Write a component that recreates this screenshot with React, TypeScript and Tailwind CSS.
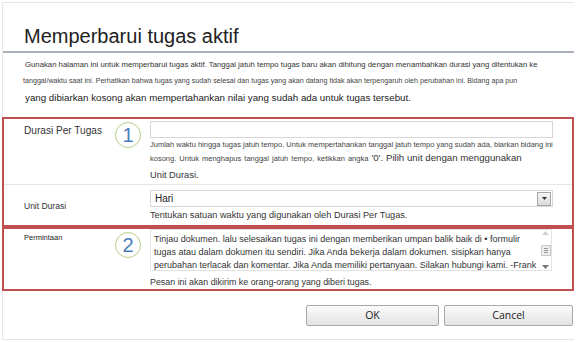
import React from "react";

const font = { fontFamily: '"Liberation Sans", Arial, sans-serif' };

// Numbered green callout circle.
function Callout({ n }: { n: string }) {
    return (
        <div className="flex h-[26px] w-[26px] items-center justify-center rounded-full border-[1.5px] border-[#b5cf8a] bg-white text-[20px] leading-none text-[#4a7ebb]">
            {n}
        </div>
    );
}

export default function App() {
    return (
        <div
            className="h-[342px] w-[576px] overflow-hidden bg-white text-[#333]"
            style={font}
        >
            <div className="ml-[2px] mt-[2px] flex h-[338px] w-[572px] flex-col border-l border-t border-b border-[#e6e6e6]">
                {/* title */}
                <div className="h-[48px] shrink-0 pl-[21px] pt-[21px]">
                    <h1 className="text-[20px] leading-[24px] text-[#222]">Memperbarui tugas aktif</h1>
                </div>
                <div className="h-[2px] shrink-0 bg-[#a9b0b8]" />

                {/* description */}
                <div className="h-[64px] shrink-0 pl-[22px] pt-[6px]">
                    <p className="whitespace-nowrap text-[7.75px] leading-[12px] text-[#333]">
                        Gunakan halaman ini untuk memperbarui tugas aktif. Tanggal jatuh tempo tugas baru akan dihitung dengan menambahkan durasi yang ditentukan ke
                    </p>
                    <p className="-ml-[2px] mt-[4px] whitespace-nowrap text-[7.15px] leading-[12px] text-[#444]">
                        tanggal/waktu saat ini. Perhatikan bahwa tugas yang sudah selesai dan tugas yang akan datang tidak akan terpengaruh oleh perubahan ini. Bidang apa pun
                    </p>
                    <p className="mt-[4px] whitespace-nowrap text-[9.75px] leading-[14px] text-[#222]">
                        yang dibiarkan kosong akan mempertahankan nilai yang sudah ada untuk tugas tersebut.
                    </p>
                </div>

                {/* box 1 */}
                <div className="-ml-[1px] h-[110px] w-[572px] shrink-0 border-2 border-[#c0504d]">
                    <div className="flex h-[66px] border-b border-[#e4e4e4]">
                        <div className="flex w-[146px] shrink-0 pl-[20px] pt-[5px]">
                            <span className="w-[91px] text-[10.1px] leading-[14px] text-[#333]">Durasi Per Tugas</span>
                            <div className="-mt-[2px]">
                                <Callout n="1" />
                            </div>
                        </div>
                        <div className="min-w-0 flex-1 pt-[2px]">
                            <div className="h-[17px] w-[403px] border border-[#d7d7d7] bg-white" />
                            <p className="mt-[1px] whitespace-nowrap text-[7.5px] leading-[12px] text-[#444]">
                                Jumlah waktu hingga tugas jatuh tempo. Untuk mempertahankan tanggal jatuh tempo yang sudah ada, biarkan bidang ini
                            </p>
                            <p className="whitespace-nowrap text-[7.5px] leading-[14px] text-[#444] [word-spacing:1px]">
                                kosong. Untuk menghapus tanggal jatuh tempo, ketikkan angka{" "}
                                <span className="text-[9.7px] text-[#333] [word-spacing:0px]">'0'. Pilih unit dengan menggunakan</span>
                            </p>
                            <p className="mt-[2px] text-[9.3px] leading-[14px] text-[#333]">Unit Durasi.</p>
                        </div>
                    </div>
                    <div className="flex h-[40px]">
                        <div className="w-[146px] shrink-0 pl-[20px] pt-[7px]">
                            <span className="text-[8.5px] leading-[12px] text-[#333]">Unit Durasi</span>
                        </div>
                        <div className="min-w-0 flex-1 pt-[5px]">
                            <div className="flex h-[17px] w-[403px] items-center justify-between border border-[#d7d7d7] bg-white pl-[4px] pr-[1px]">
                                <span className="text-[10px] leading-none text-[#222]">Hari</span>
                                <div className="flex h-[14px] w-[14px] items-center justify-center border border-[#a6a6a6] bg-gradient-to-b from-[#f6f6f6] to-[#dcdcdc]">
                                    <svg width="5" height="3" viewBox="0 0 5 3">
                                        <path d="M0 0h5L2.5 3z" fill="#333" />
                                    </svg>
                                </div>
                            </div>
                            <p className="mt-[1px] whitespace-nowrap text-[9.2px] leading-[14px] text-[#333]">
                                Tentukan satuan waktu yang digunakan oleh Durasi Per Tugas.
                            </p>
                        </div>
                    </div>
                </div>

                {/* box 2 */}
                <div className="-ml-[1px] flex h-[64px] w-[572px] shrink-0 border-2 border-[#c0504d]">
                    <div className="flex w-[146px] shrink-0 pl-[20px] pt-[3px]">
                        <span className="w-[91px] text-[7.5px] leading-[12px] text-[#222]">Permintaan</span>
                        <div>
                            <Callout n="2" />
                        </div>
                    </div>
                    <div className="flex min-w-0 flex-1 flex-col">
                        <div className="flex h-[42px] w-[402px] shrink-0 border border-[#e2e2e2] bg-white">
                            <div className="min-w-0 flex-1 whitespace-nowrap pl-[3px] pt-[3px] text-[9px] leading-[13px] text-[#333]">
                                <p>Tinjau dokumen. lalu selesaikan tugas ini dengan memberikan umpan balik baik di • formulir</p>
                                <p>tugas atau dalam dokumen itu sendiri. Jika Anda bekerja dalam dokumen. sisipkan hanya</p>
                                <p>perubahan terlacak dan komentar. Jika Anda memiliki pertanyaan. Silakan hubungi kami. -Frank</p>
                            </div>
                            <div className="flex w-[11px] shrink-0 flex-col items-center justify-between py-[1px]">
                                <svg width="7" height="4" viewBox="0 0 7 4">
                                    <path d="M0 4L3.5 0 7 4z" fill="#d0d0d0" />
                                </svg>
                                <div className="flex h-[11px] w-[10px] flex-col items-center justify-center gap-[1px] border border-[#c9c9c9] bg-[#eee]">
                                    <div className="h-px w-[4px] bg-[#999]" />
                                    <div className="h-px w-[4px] bg-[#999]" />
                                    <div className="h-px w-[4px] bg-[#999]" />
                                </div>
                                <svg width="7" height="4" viewBox="0 0 7 4">
                                    <path d="M0 0h7L3.5 4z" fill="#777" />
                                </svg>
                            </div>
                        </div>
                        <p className="mt-[4px] whitespace-nowrap text-[8.9px] leading-[14px] text-[#333]">
                            Pesan ini akan dikirim ke orang-orang yang diberi tugas.
                        </p>
                    </div>
                </div>

                {/* buttons */}
                <div className="flex shrink-0 justify-end gap-[5px] pr-[1px] pt-[14px]">
                    <button className="h-[21px] w-[133px] rounded-[2px] border border-[#a8a8a8] bg-gradient-to-b from-[#fbfbfb] to-[#e3e3e3] text-[10.5px] text-[#222]" style={{ fontFamily: '"Open Sans", sans-serif' }}>
                        OK
                    </button>
                    <button className="h-[21px] w-[129px] rounded-[2px] border border-[#a8a8a8] bg-gradient-to-b from-[#fbfbfb] to-[#e3e3e3] text-[10.5px] text-[#222]" style={{ fontFamily: '"Open Sans", sans-serif' }}>
                        Cancel
                    </button>
                </div>
            </div>
        </div>
    );
}
